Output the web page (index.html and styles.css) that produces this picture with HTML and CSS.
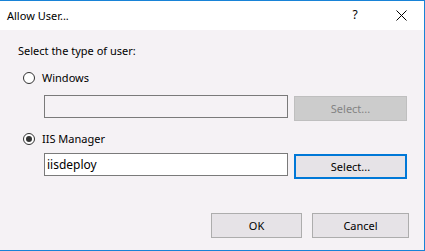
FILE: index.html
```html
<!DOCTYPE html>
<html lang="en">
    <head>
        <meta charset="UTF-8" />
        <title>Allow User...</title>
        <link rel="stylesheet" href="styles.css">
    </head>
    <body>
        <div class="dialog">
            <div class="titlebar">
                <span class="title">Allow User...</span>
                <span class="caption-btn help">?</span>
                <span class="caption-btn close">
                    <svg width="11" height="11" viewBox="0 0 11 11">
                        <path d="M0.5 0.5 L10.5 10.5 M10.5 0.5 L0.5 10.5" stroke="#000" stroke-width="1" fill="none" />
                    </svg>
                </span>
            </div>

            <div class="content">
                <div class="heading">Select the type of user:</div>

                <div class="option option-first">
                    <span class="radio"></span>
                    <span>Windows</span>
                </div>
                <div class="field-row">
                    <input class="textbox" type="text" disabled />
                    <button class="btn btn-select" disabled>Select...</button>
                </div>

                <div class="option option-second">
                    <span class="radio checked"></span>
                    <span>IIS Manager</span>
                </div>
                <div class="field-row field-row-tight">
                    <input class="textbox" type="text" value="iisdeploy" />
                    <button class="btn btn-select focused">Select...</button>
                </div>

                <div class="footer">
                    <button class="btn btn-ok">OK</button>
                    <button class="btn btn-cancel">Cancel</button>
                </div>
            </div>
        </div>
    </body>
</html>
```

FILE: styles.css
```css
body {
    margin: 0;
    font-family: "Noto Sans", sans-serif;
    font-size: 11px;
    color: #000;
}

.dialog {
    width: 424px;
    height: 249px;
    border-top: 1px solid #1883d7;
    border-right: 1px solid #1883d7;
    border-bottom: 1px solid #1883d7;
    background: #f5f2f5;
    display: flex;
    flex-direction: column;
}

.titlebar {
    height: 29px;
    background: #fff;
    display: flex;
    align-items: center;
    padding-left: 7px;
}

.title {
    flex: 1;
    font-size: 11px;
}

.caption-btn {
    width: 46px;
    height: 29px;
    display: flex;
    align-items: center;
    justify-content: center;
}

.help {
    font-size: 12px;
    padding-bottom: 2px;
    box-sizing: border-box;
}

.content {
    padding: 13px 15px 0 18px;
    flex: 1;
}

.heading {
    line-height: 16px;
}

.option {
    display: flex;
    align-items: center;
    gap: 7px;
    height: 14px;
    line-height: 14px;
    padding-left: 5px;
}

.option-first {
    margin-top: 12px;
}

.option-second {
    margin-top: 11px;
}

.radio {
    width: 12px;
    height: 12px;
    box-sizing: border-box;
    border: 1px solid #333;
    border-radius: 50%;
    background: #fff;
    display: flex;
    align-items: center;
    justify-content: center;
}

.radio.checked::after {
    content: "";
    width: 6px;
    height: 6px;
    border-radius: 50%;
    background: #333;
}

.field-row {
    display: flex;
    align-items: flex-start;
    gap: 6px;
    margin-top: 10px;
    padding-left: 26px;
}

.field-row-tight {
    margin-top: 7px;
}

.textbox {
    width: 244px;
    height: 23px;
    box-sizing: border-box;
    border: 1px solid #7a7a7a;
    padding: 0 2px;
    margin: 0;
    font-family: inherit;
    font-size: 12px;
    color: #000;
    background: #fff;
    outline: none;
}

.textbox:disabled {
    background: #f5f2f5;
}

.btn {
    height: 25px;
    box-sizing: border-box;
    border: 1px solid #adadad;
    background: #e6e3e7;
    font-family: inherit;
    font-size: 11px;
    color: #000;
    padding: 0;
    margin: 0;
}

.btn-select {
    width: 113px;
    margin-top: 1px;
}

.btn-select:disabled {
    background: #cccccc;
    border-color: #bfbfbf;
    color: #838383;
}

.btn-select.focused {
    border: 2px solid #0078d7;
}

.footer {
    display: flex;
    justify-content: flex-end;
    gap: 10px;
    margin-top: 34px;
}

.btn-ok {
    width: 91px;
}

.btn-cancel {
    width: 97px;
}
```
